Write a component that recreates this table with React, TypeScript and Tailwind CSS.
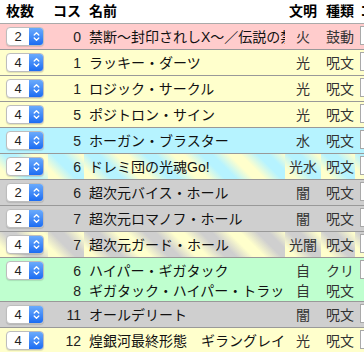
import React from 'react';

type Line = { cost: number; name: string; civ: string; kind: string };

type Row = {
  qty: number;
  bg: string;
  h: string;
  lines: Line[];
};

const YELLOW = 'bg-[#ffffcc]';
const GRAY = 'bg-[#cfcfcf]';

const rows: Row[] = [
  { qty: 2, bg: 'bg-[#ffcccc]', h: 'h-[25px]', lines: [{ cost: 0, name: '禁断〜封印されしX〜／伝説の禁断', civ: '火', kind: '鼓動' }] },
  { qty: 4, bg: YELLOW, h: 'h-[25px]', lines: [{ cost: 1, name: 'ラッキー・ダーツ', civ: '光', kind: '呪文' }] },
  { qty: 4, bg: YELLOW, h: 'h-[25px]', lines: [{ cost: 1, name: 'ロジック・サークル', civ: '光', kind: '呪文' }] },
  { qty: 4, bg: YELLOW, h: 'h-[25px]', lines: [{ cost: 5, name: 'ポジトロン・サイン', civ: '光', kind: '呪文' }] },
  { qty: 4, bg: 'bg-[#b6f3ff]', h: 'h-[25px]', lines: [{ cost: 5, name: 'ホーガン・ブラスター', civ: '水', kind: '呪文' }] },
  {
    qty: 2,
    bg: 'bg-[repeating-linear-gradient(45deg,#ffffcc_0px,#ffffcc_8px,#b6f3ff_20px,#b6f3ff_28px,#ffffcc_40px)]',
    h: 'h-[25px]',
    lines: [{ cost: 6, name: 'ドレミ団の光魂Go!', civ: '光水', kind: '呪文' }],
  },
  { qty: 2, bg: GRAY, h: 'h-[25px]', lines: [{ cost: 6, name: '超次元バイス・ホール', civ: '闇', kind: '呪文' }] },
  { qty: 2, bg: GRAY, h: 'h-[25px]', lines: [{ cost: 7, name: '超次元ロマノフ・ホール', civ: '闇', kind: '呪文' }] },
  {
    qty: 4,
    bg: 'bg-[repeating-linear-gradient(45deg,#ffffcc_0px,#ffffcc_8px,#cfcfcf_20px,#cfcfcf_28px,#ffffcc_40px)]',
    h: 'h-[25px]',
    lines: [{ cost: 7, name: '超次元ガード・ホール', civ: '光闇', kind: '呪文' }],
  },
  {
    qty: 4,
    bg: 'bg-[#bfffcf]',
    h: 'h-[43px]',
    lines: [
      { cost: 6, name: 'ハイパー・ギガタック', civ: '自', kind: 'クリーチャー' },
      { cost: 8, name: 'ギガタック・ハイパー・トラップ', civ: '自', kind: '呪文' },
    ],
  },
  { qty: 4, bg: GRAY, h: 'h-[25px]', lines: [{ cost: 11, name: 'オールデリート', civ: '闇', kind: '呪文' }] },
  { qty: 4, bg: YELLOW, h: 'h-[25px]', lines: [{ cost: 12, name: '煌銀河最終形態　ギラングレイオ', civ: '光', kind: '呪文' }] },
];

const cols = 'grid grid-cols-[48px_36px_201px_36px_34px_120px]';

const Stepper = ({ value }: { value: number }) => (
  <div className="flex h-[19px] w-[38px] overflow-hidden rounded-[4px] border border-[#bdbdbd] bg-white shadow-[0_1px_1px_rgba(0,0,0,0.12)]">
    <span className="flex flex-1 items-center justify-center text-[13px] text-[#222]">{value}</span>
    <span className="flex w-[14px] items-center justify-center bg-gradient-to-b from-[#6aaafc] to-[#1b6cf2]">
      <svg width="7" height="11" viewBox="0 0 7 11" fill="none">
        <path
          d="M1.2 4 3.5 1.7 5.8 4M1.2 7l2.3 2.3L5.8 7"
          stroke="#fff"
          strokeWidth="1.3"
          strokeLinecap="round"
          strokeLinejoin="round"
        />
      </svg>
    </span>
  </div>
);

export default function App() {
  return (
    <div className="h-[352px] w-[364px] overflow-hidden bg-white font-['Liberation_Sans','Noto_Sans_CJK_JP',sans-serif] text-[14px] text-[#222]">
      {/* header */}
      <div className={`${cols} h-[24px] border-b border-[#aaa] font-bold leading-[23px] text-black`}>
        <div className="pl-[6px]">枚数</div>
        <div className="pr-[3px] text-right">コス</div>
        <div className="pl-[5px]">名前</div>
        <div className="text-center">文明</div>
        <div className="overflow-hidden whitespace-nowrap pl-[5px]">種類</div>
        <div className="pl-[5px]">コメント</div>
      </div>

      {rows.map((row, i) => (
        <div key={i} className={`${cols} ${row.h} box-content border-b border-[#999]`}>
          <div className={`${row.bg} pl-[6px] pt-[3px]`}>
            <Stepper value={row.qty} />
          </div>
          <div className={`${row.bg} pr-[3px] pt-[3px] text-right`}>
            {row.lines.map((l, j) => (
              <div key={j} className="h-5 leading-5">{l.cost}</div>
            ))}
          </div>
          <div className={`${row.bg} overflow-hidden pl-[5px] pt-[3px]`}>
            {row.lines.map((l, j) => (
              <div key={j} className="h-5 whitespace-nowrap leading-5 text-[#111]">{l.name}</div>
            ))}
          </div>
          <div className={`${row.bg} overflow-hidden pt-[3px] text-center`}>
            {row.lines.map((l, j) => (
              <div key={j} className="h-5 whitespace-nowrap leading-5 text-[#333]">{l.civ}</div>
            ))}
          </div>
          <div className={`${row.bg} overflow-hidden pl-[5px] pt-[3px]`}>
            {row.lines.map((l, j) => (
              <div key={j} className="h-5 whitespace-nowrap leading-5 text-[#333]">{l.kind}</div>
            ))}
          </div>
          <div className={`${row.bg} pl-[5px] pt-[2px]`}>
            <div className="h-[19px] w-[100px] border border-[#a9a9a9] bg-white" />
          </div>
        </div>
      ))}
    </div>
  );
}
